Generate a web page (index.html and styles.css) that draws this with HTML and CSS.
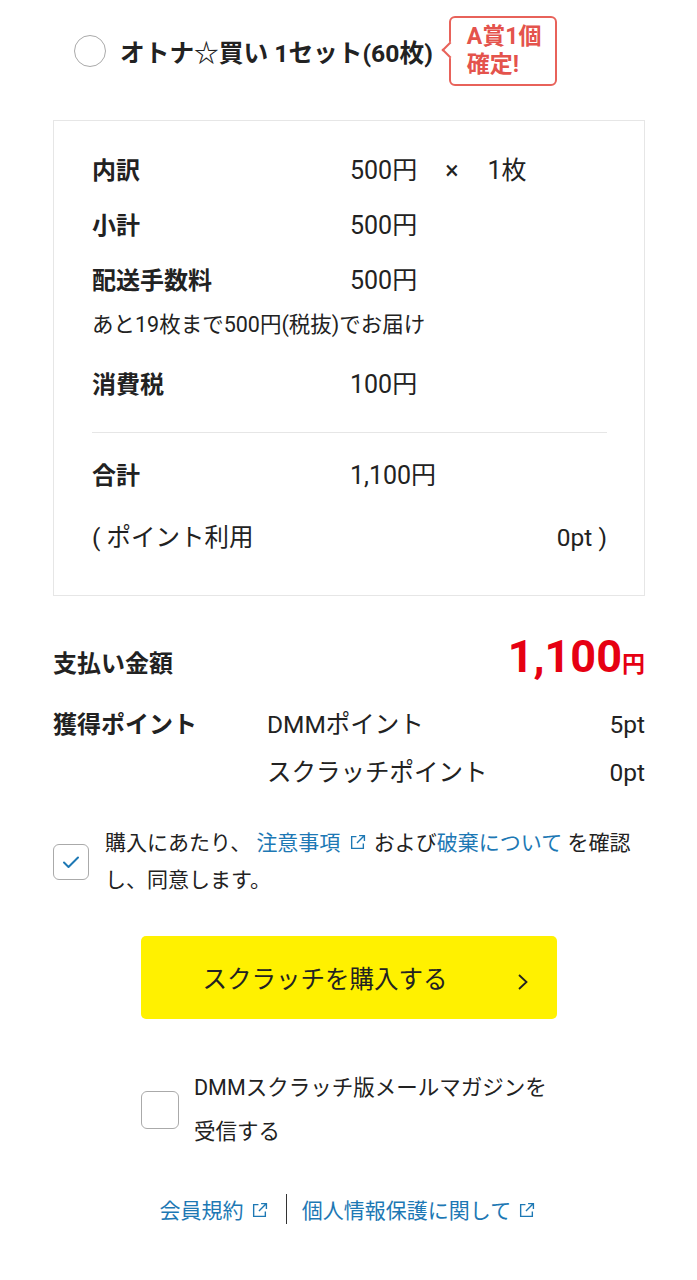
FILE: index.html
```html
<!DOCTYPE html>
<html lang="ja">
<head>
  <meta charset="UTF-8">
  <meta name="viewport" content="width=device-width, initial-scale=1.0">
  <title>購入確認</title>
  <link rel="stylesheet" href="styles.css">
</head>
<body>
  <div class="page">
    <div class="set-row">
      <span class="radio"></span>
      <span class="set-name">オトナ☆買い 1セット(60枚)</span>
      <span class="badge">A賞1個<br>確定!</span>
    </div>

    <div class="detail">
      <div class="row">
        <span class="label">内訳</span>
        <span class="value">500円<span class="times">×</span>1枚</span>
      </div>
      <div class="row">
        <span class="label">小計</span>
        <span class="value">500円</span>
      </div>
      <div class="row">
        <span class="label">配送手数料</span>
        <span class="value">500円</span>
      </div>
      <p class="note">あと19枚まで500円(税抜)でお届け</p>
      <div class="row row-tax">
        <span class="label">消費税</span>
        <span class="value">100円</span>
      </div>
      <hr class="divider">
      <div class="row">
        <span class="label">合計</span>
        <span class="value">1,100円</span>
      </div>
      <div class="row row-point">
        <span>( ポイント利用</span>
        <span>0pt )</span>
      </div>
    </div>

    <div class="pay">
      <span class="pay-label">支払い金額</span>
      <span class="pay-amount">1,100<small>円</small></span>
    </div>

    <div class="earn">
      <span class="earn-label">獲得ポイント</span>
      <div class="earn-list">
        <div class="earn-item"><span>DMMポイント</span><span>5pt</span></div>
        <div class="earn-item"><span>スクラッチポイント</span><span>0pt</span></div>
      </div>
    </div>

    <label class="agree">
      <span class="check checked">
        <svg width="18" height="14" viewBox="0 0 18 14"><path d="M2 7.5l4.5 4.5L16 2.5" fill="none" stroke="#1d78b4" stroke-width="2" stroke-linecap="round" stroke-linejoin="round"/></svg>
      </span>
      <span class="agree-text">購入にあたり、 <a href="#">注意事項</a> <svg class="ext" viewBox="0 0 16 16"><path d="M7 2.5H2.5v11h11V9M9.5 1.5h5v5M14.5 1.5L7.5 8.5" fill="none" stroke="currentColor" stroke-width="1.3"/></svg> および<a href="#">破棄について</a> を確認<br>し、同意します。</span>
    </label>

    <button class="buy">スクラッチを購入する<span class="chev">
      <svg width="12" height="18" viewBox="0 0 12 18"><path d="M2 2l7.5 7L2 16" fill="none" stroke="#222" stroke-width="1.8"/></svg>
    </span></button>

    <label class="mail">
      <span class="check"></span>
      <span class="mail-text">DMMスクラッチ版メールマガジンを<br>受信する</span>
    </label>

    <div class="links">
      <a href="#">会員規約 <svg class="ext" viewBox="0 0 16 16"><path d="M7 2.5H2.5v11h11V9M9.5 1.5h5v5M14.5 1.5L7.5 8.5" fill="none" stroke="currentColor" stroke-width="1.3"/></svg></a>
      <span class="sep"></span>
      <a href="#">個人情報保護に関して <svg class="ext" viewBox="0 0 16 16"><path d="M7 2.5H2.5v11h11V9M9.5 1.5h5v5M14.5 1.5L7.5 8.5" fill="none" stroke="currentColor" stroke-width="1.3"/></svg></a>
    </div>
  </div>
</body>
</html>
```

FILE: styles.css
```css
body {
  margin: 0;
  background: #fff;
  color: #222;
  font-family: Roboto, "Noto Sans CJK JP", sans-serif;
}
.page { padding: 16px 52px 40px 53px; }
a { color: #1d78b4; text-decoration: none; }

/* セット選択 */
.set-row { display: flex; align-items: center; padding-left: 21px; height: 70px; }
.radio {
  width: 30px; height: 30px;
  border: 1.5px solid #aaa;
  border-radius: 50%;
  flex-shrink: 0;
}
.set-name { margin-left: 14px; font-size: 24.7px; font-weight: bold; }
.badge {
  position: relative;
  margin-left: 16px;
  padding: 5px 14px 5px 16px;
  border: 2px solid #e8625a;
  border-radius: 6px;
  color: #e4534c;
  font-size: 23px;
  font-weight: bold;
  line-height: 28px;
  background: #fff;
}
.badge::before {
  content: "";
  position: absolute;
  left: -7px; top: 26px;
  width: 10px; height: 10px;
  background: #fff;
  border-left: 2px solid #e8625a;
  border-bottom: 2px solid #e8625a;
  transform: rotate(45deg);
}

/* 明細 */
.detail {
  margin-top: 34px;
  border: 1px solid #e6e6e6;
  padding: 35px 37px 42px 38px;
  font-size: 25px;
}
.row { display: flex; line-height: 30px; margin-bottom: 25px; }
.row .label { width: 258px; font-size: 24px; font-weight: bold; }
.times { margin: 0 29px 0 28px; font-size: 25px; }
.note { margin: -9px 0 0; font-size: 21.5px; line-height: 26px; }
.row-tax { margin-top: 32px; margin-bottom: 0; }
.divider { border: 0; border-top: 1px solid #e6e6e6; margin: 32px 0 28px; }
.row-point { justify-content: space-between; margin: 32px 0 0; font-size: 24.5px; }

/* 支払い */
.pay { display: flex; justify-content: space-between; align-items: center; margin-top: 36px; }
.pay-label { font-size: 24px; font-weight: bold; }
.pay-amount { color: #e60012; font-size: 45px; font-weight: bold; line-height: 50px; }
.pay-amount small { font-size: 23px; }

.earn { display: flex; margin-top: 11px; font-size: 24.5px; }
.earn-label { width: 214px; font-size: 24px; font-weight: bold; line-height: 48px; }
.earn-list { flex: 1; }
.earn-item { display: flex; justify-content: space-between; line-height: 48px; }

/* 同意 */
.agree { display: flex; align-items: center; margin-top: 28px; font-size: 21px; line-height: 37px; }
.check {
  width: 34px; height: 34px;
  border: 1.5px solid #aaa;
  border-radius: 6px;
  flex-shrink: 0;
  display: flex; align-items: center; justify-content: center;
}
.agree .check { margin-right: 16px; }
.ext { width: 17px; height: 17px; margin: 0 3px; color: #1d78b4; vertical-align: -1px; }

.buy {
  display: flex; align-items: center; justify-content: center;
  position: relative;
  width: 416px; height: 83px;
  margin: 37px auto 0;
  padding: 0 48px 0 0;
  border: 0; border-radius: 5px;
  background: #fff100;
  color: #222;
  font-family: inherit;
  font-size: 24.5px;
}
.chev { position: absolute; right: 28px; top: 32px; }

.mail { display: flex; align-items: center; width: 416px; margin: 47px auto 0; font-size: 21.5px; line-height: 44px; }
.mail .check { width: 36px; height: 36px; margin-right: 15px; }

.links { display: flex; justify-content: center; align-items: center; margin-top: 40px; font-size: 21px; }
.links a .ext { margin-left: 2px; }
.sep { width: 1px; height: 30px; background: #333; margin: 0 15px; }
```
